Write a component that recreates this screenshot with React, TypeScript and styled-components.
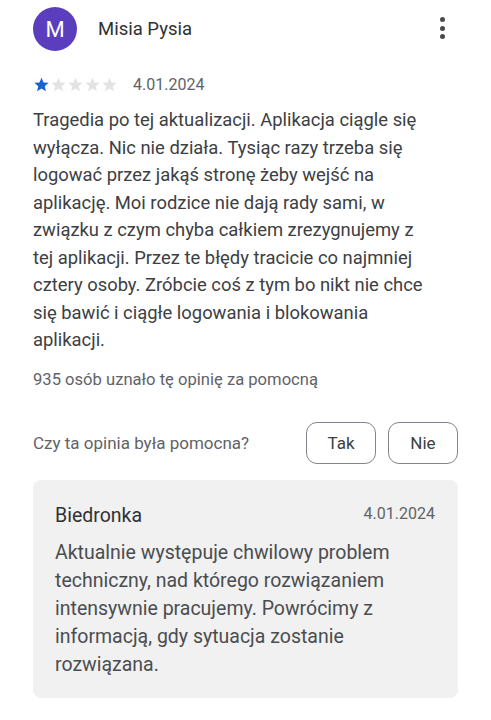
import React from 'react';
import styled, { createGlobalStyle } from 'styled-components';

const GlobalStyle = createGlobalStyle`
  body {
    margin: 0;
    background: #ffffff;
    font-family: Roboto, 'Noto Sans', 'Liberation Sans', sans-serif;
  }
`;

// lines broken the same way as on the phone
const reviewLines = [
  'Tragedia po tej aktualizacji. Aplikacja ciągle się',
  'wyłącza. Nic nie działa. Tysiąc razy trzeba się',
  'logować przez jakąś stronę żeby wejść na',
  'aplikację. Moi rodzice nie dają rady sami, w',
  'związku z czym chyba całkiem zrezygnujemy z',
  'tej aplikacji. Przez te błędy tracicie co najmniej',
  'cztery osoby. Zróbcie coś z tym bo nikt nie chce',
  'się bawić i ciągłe logowania i blokowania',
  'aplikacji.',
];

const replyLines = [
  'Aktualnie występuje chwilowy problem',
  'techniczny, nad którego rozwiązaniem',
  'intensywnie pracujemy. Powrócimy z',
  'informacją, gdy sytuacja zostanie',
  'rozwiązana.',
];

const Star: React.FC<{ filled: boolean }> = ({ filled }) => (
  <svg width='17' height='17' viewBox='0 0 24 24'>
    <path
      d='M12 2.5l2.9 6.6 7.1.6-5.4 4.7 1.6 7-6.2-3.7-6.2 3.7 1.6-7L2 9.7l7.1-.6z'
      fill={filled ? '#1a62d0' : '#e3e3e3'}
    />
  </svg>
);

const App: React.FC = () => {
  return (
    <Page>
      <GlobalStyle />
      <Header>
        <Avatar>M</Avatar>
        <Name>Misia Pysia</Name>
        <MenuButton>
          <Dot />
          <Dot />
          <Dot />
        </MenuButton>
      </Header>

      <MetaRow>
        <Stars>
          {[1, 2, 3, 4, 5].map((n) => (
            <Star key={n} filled={n <= 1} />
          ))}
        </Stars>
        <DateText>4.01.2024</DateText>
      </MetaRow>

      <ReviewBody>
        {reviewLines.map((line) => (
          <Line key={line}>{line}</Line>
        ))}
      </ReviewBody>

      <Helpful>935 osób uznało tę opinię za pomocną</Helpful>

      <QuestionRow>
        <Question>Czy ta opinia była pomocna?</Question>
        <Buttons>
          <VoteButton>Tak</VoteButton>
          <VoteButton>Nie</VoteButton>
        </Buttons>
      </QuestionRow>

      <ReplyCard>
        <ReplyHeader>
          <ReplyAuthor>Biedronka</ReplyAuthor>
          <ReplyDate>4.01.2024</ReplyDate>
        </ReplyHeader>
        <ReplyBody>
          {replyLines.map((line) => (
            <Line key={line}>{line}</Line>
          ))}
        </ReplyBody>
      </ReplyCard>
    </Page>
  );
};

export default App;

const Page = styled.div`
  padding: 7px 33px 20px 33px;
  color: #3c4043;
`;

const Header = styled.div`
  display: flex;
  align-items: center;
  height: 44px;
`;

const Avatar = styled.div`
  width: 44px;
  height: 44px;
  border-radius: 50%;
  background: #5b3ebd;
  color: #ffffff;
  font-size: 22px;
  display: flex;
  align-items: center;
  justify-content: center;
  flex-shrink: 0;
`;

const Name = styled.div`
  margin-left: 21px;
  font-size: 18.5px;
  color: #303134;
  flex: 1;
`;

const MenuButton = styled.div`
  display: flex;
  flex-direction: column;
  align-items: center;
  gap: 3.5px;
  width: 24px;
  margin-right: 4px;
  margin-top: -2px;
`;

const Dot = styled.span`
  width: 5px;
  height: 5px;
  border-radius: 50%;
  background: #4a4a4a;
`;

const MetaRow = styled.div`
  display: flex;
  align-items: center;
  height: 18px;
  margin-top: 24px;
`;

const Stars = styled.div`
  display: flex;
`;

const DateText = styled.span`
  margin-left: 15px;
  font-size: 16px;
  color: #5f6368;
`;

const Line = styled.span`
  display: block;
  white-space: nowrap;
`;

const ReviewBody = styled.div`
  margin-top: 13px;
  font-size: 18.4px;
  line-height: 27.5px;
  color: #3c4043;
`;

const Helpful = styled.div`
  margin-top: 16px;
  font-size: 16.6px;
  line-height: 20px;
  color: #5f6368;
`;

const QuestionRow = styled.div`
  display: flex;
  align-items: center;
  justify-content: space-between;
  margin-top: 32px;
`;

const Question = styled.span`
  font-size: 17px;
  color: #5f6368;
`;

const Buttons = styled.div`
  display: flex;
  gap: 12px;
`;

const VoteButton = styled.button`
  width: 70px;
  height: 42px;
  border: 1px solid #80868b;
  border-radius: 11px;
  background: #ffffff;
  font-family: Roboto, 'Noto Sans', sans-serif;
  font-size: 17px;
  color: #3c4043;
  padding: 0;
`;

const ReplyCard = styled.div`
  margin-top: 16px;
  background: #f1f1f1;
  border-radius: 8px;
  padding: 24px 23px 19px 22px;
`;

const ReplyHeader = styled.div`
  display: flex;
  justify-content: space-between;
  align-items: center;
  height: 24px;
`;

const ReplyAuthor = styled.span`
  font-size: 19.5px;
  color: #303134;
`;

const ReplyDate = styled.span`
  font-size: 16px;
  color: #5f6368;
  margin-top: -5px;
`;

const ReplyBody = styled.div`
  margin-top: 11px;
  font-size: 19.5px;
  line-height: 28px;
  color: #4a4d50;
`;
